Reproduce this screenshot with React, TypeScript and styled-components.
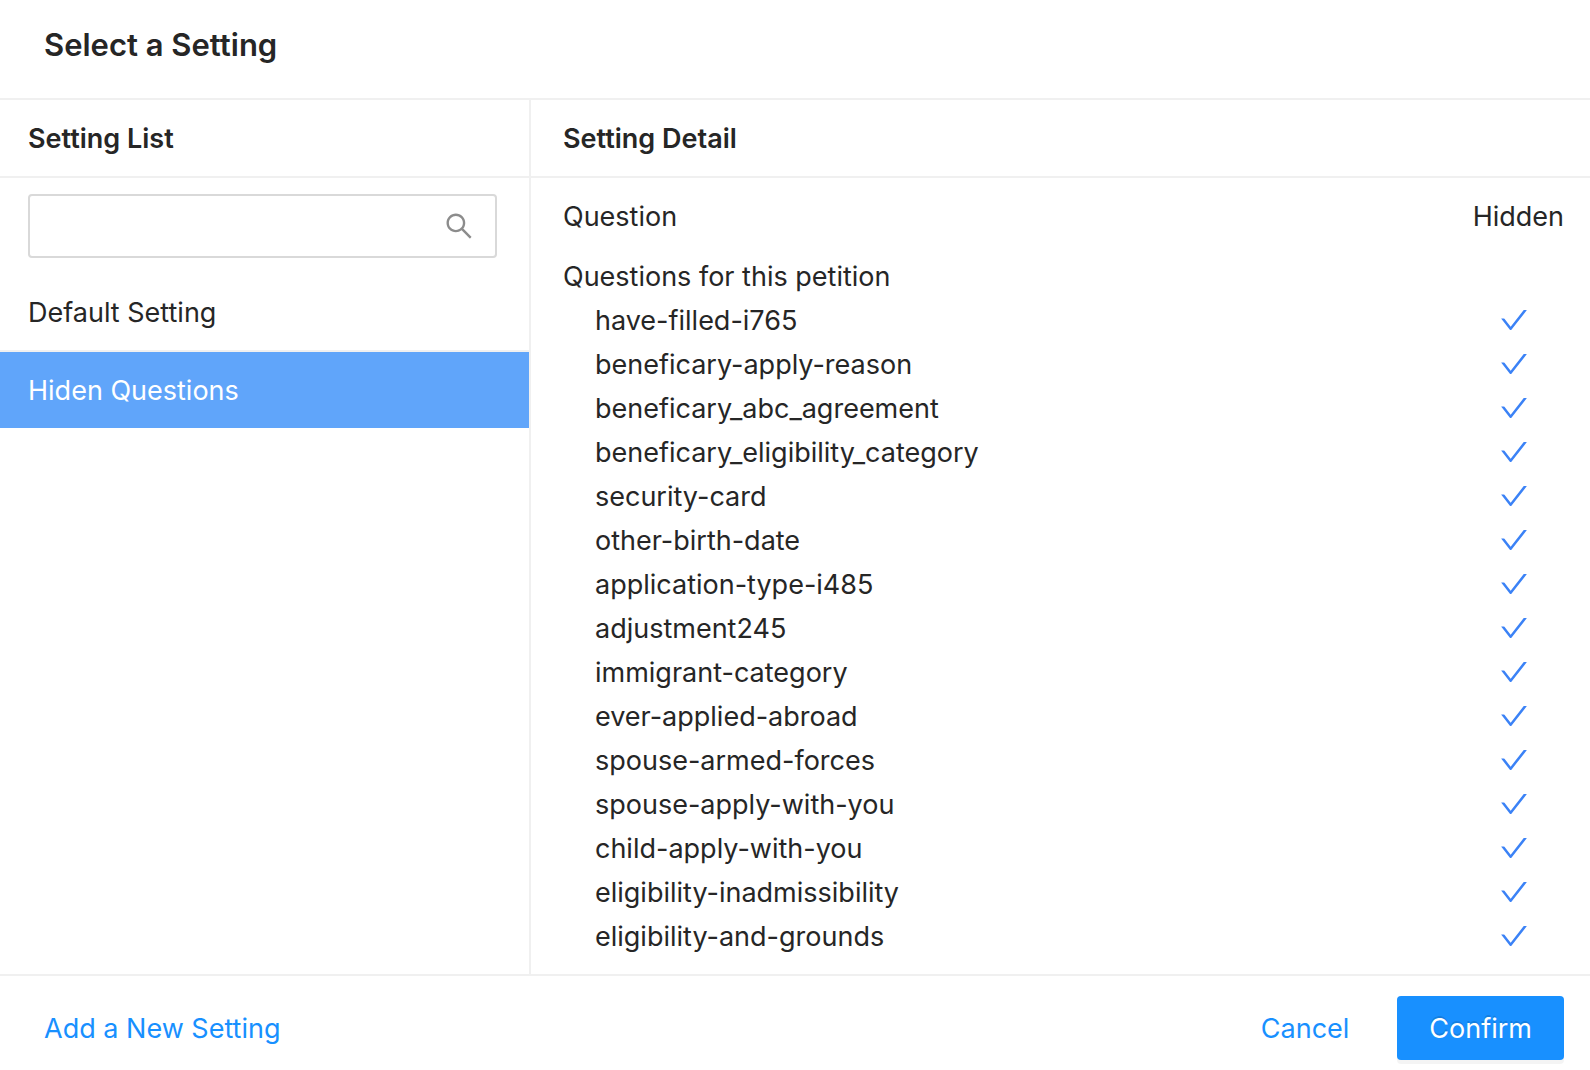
import React, { useState } from "react";
import styled, { createGlobalStyle } from "styled-components";

const GlobalStyle = createGlobalStyle`
  *, *::before, *::after { box-sizing: border-box; }
  body {
    margin: 0;
    background: #fff;
    color: #262626;
    font-family: Inter, "Liberation Sans", sans-serif;
    font-size: 27px;
    line-height: 42px;
  }
  button, input { font: inherit; }
`;

const Dialog = styled.div`
  display: flex;
  flex-direction: column;
  min-height: 100vh;
`;

const DialogHeader = styled.header`
  padding: 24px 44px 32px;
  border-bottom: 2px solid #f0f0f0;
`;

const DialogTitle = styled.h1`
  margin: 0;
  font-size: 31px;
  font-weight: 600;
`;

const Columns = styled.main`
  flex: 1;
  display: grid;
  grid-template-columns: calc(100% / 3 + 1px) 1fr;
`;

const ListPane = styled.section`
  border-right: 2px solid #f0f0f0;
`;

const DetailPane = styled.section`
  min-width: 0;
`;

const PaneTitle = styled.h2<{ $inset: number }>`
  margin: 0;
  padding: 18px ${(p) => p.$inset}px 16px;
  border-bottom: 2px solid #f0f0f0;
  font-size: 27px;
  font-weight: 600;
`;

const SearchBox = styled.form`
  display: flex;
  align-items: center;
  height: 64px;
  margin: 16px 32px 16px 28px;
  padding: 0 22px;
  border: 2px solid #d9d9d9;
  border-radius: 4px;
`;

const SearchInput = styled.input`
  flex: 1;
  min-width: 0;
  padding: 0;
  border: 0;
  outline: 0;
  background: none;
  color: inherit;
`;

const SearchButton = styled.button`
  display: flex;
  padding: 0;
  border: 0;
  background: none;
  color: #8c8c8c;
  cursor: pointer;
`;

const SettingItems = styled.ul`
  margin: 0;
  padding: 0;
  list-style: none;
`;

const SettingItem = styled.li`
  & + & { border-top: 2px solid #f0f0f0; }
`;

const SettingButton = styled.button<{ $selected: boolean }>`
  display: block;
  width: 100%;
  padding: 18px 28px 16px;
  border: 0;
  background: ${(p) => (p.$selected ? "#60a5fa" : "transparent")};
  color: ${(p) => (p.$selected ? "#fff" : "inherit")};
  text-align: left;
  cursor: pointer;
`;

const DetailBody = styled.div`
  padding: 16px 26px 16px 32px;
`;

const QuestionTable = styled.table`
  width: 100%;
  border-collapse: collapse;

  th {
    padding: 2px 0 0;
    font-weight: 400;
    text-align: left;
  }
  td { padding: 0; }
  thead th { padding-bottom: 16px; }
`;

const HiddenHeading = styled.th`
  width: 1px;
`;

const QuestionRow = styled.tr`
  th { padding-left: 32px; }
  td { padding-right: 8px; }
`;

const Icon = styled.svg`
  display: block;
  width: 28px;
  height: 28px;
  fill: currentColor;
`;

const CheckIcon = styled(Icon)`
  margin: 0 auto;
  color: #3b82f6;
`;

const DialogFooter = styled.footer`
  display: flex;
  align-items: center;
  gap: 16px;
  padding: 20px 26px 10px 44px;
  border-top: 2px solid #f0f0f0;
`;

const AddLink = styled.a`
  margin-right: auto;
  padding-top: 2px;
  color: #1890ff;
  text-decoration: none;
`;

const FooterButton = styled.button<{ $primary?: boolean }>`
  height: 64px;
  padding: 2px 32px 0;
  border: 0;
  border-radius: 4px;
  background: ${(p) => (p.$primary ? "#1890ff" : "transparent")};
  color: ${(p) => (p.$primary ? "#fff" : "#1890ff")};
  box-shadow: ${(p) => (p.$primary ? "0 4px 0 rgba(0, 0, 0, 0.045)" : "none")};
  text-shadow: ${(p) => (p.$primary ? "0 -2px 0 rgba(0, 0, 0, 0.12)" : "none")};
  cursor: pointer;
`;

const settings = ["Default Setting", "Hiden Questions"];

const questions = [
  "have-filled-i765",
  "beneficary-apply-reason",
  "beneficary_abc_agreement",
  "beneficary_eligibility_category",
  "security-card",
  "other-birth-date",
  "application-type-i485",
  "adjustment245",
  "immigrant-category",
  "ever-applied-abroad",
  "spouse-armed-forces",
  "spouse-apply-with-you",
  "child-apply-with-you",
  "eligibility-inadmissibility",
  "eligibility-and-grounds",
];

export default function App() {
  const [selected, setSelected] = useState("Hiden Questions");
  const [query, setQuery] = useState("");

  return (
    <>
      <GlobalStyle />
      <Dialog>
        <DialogHeader>
          <DialogTitle>Select a Setting</DialogTitle>
        </DialogHeader>
        <Columns>
          <ListPane>
            <PaneTitle $inset={28}>Setting List</PaneTitle>
            <SearchBox role="search" onSubmit={(e) => e.preventDefault()}>
              <SearchInput
                type="text"
                aria-label="Search settings"
                value={query}
                onChange={(e) => setQuery(e.target.value)}
              />
              <SearchButton type="submit" aria-label="Search">
                <Icon viewBox="64 64 896 896" aria-hidden="true">
                  <path d="M909.6 854.5L649.9 594.8C690.2 542.7 712 479 712 412c0-80.2-31.3-155.4-87.9-212.1-56.6-56.7-132-87.9-212.1-87.9s-155.5 31.3-212.1 87.9C143.2 256.5 112 331.8 112 412c0 80.1 31.3 155.5 87.9 212.1C256.5 680.8 331.8 712 412 712c67 0 130.6-21.8 182.7-62l259.7 259.6a8.2 8.2 0 0011.6 0l43.6-43.5a8.2 8.2 0 000-11.6zM570.4 570.4C528 612.7 471.8 636 412 636s-116-23.3-158.4-65.6C211.3 528 188 471.8 188 412s23.3-116.1 65.6-158.4C296 211.3 352.2 188 412 188s116.1 23.2 158.4 65.6S636 352.2 636 412s-23.3 116.1-65.6 158.4z" />
                </Icon>
              </SearchButton>
            </SearchBox>
            <SettingItems>
              {settings
                .filter((name) => name.toLowerCase().includes(query.toLowerCase()))
                .map((name) => (
                  <SettingItem key={name}>
                    <SettingButton
                      type="button"
                      $selected={name === selected}
                      aria-pressed={name === selected}
                      onClick={() => setSelected(name)}
                    >
                      {name}
                    </SettingButton>
                  </SettingItem>
                ))}
            </SettingItems>
          </ListPane>
          <DetailPane>
            <PaneTitle $inset={32}>Setting Detail</PaneTitle>
            <DetailBody>
              <QuestionTable>
                <thead>
                  <tr>
                    <th scope="col">Question</th>
                    <HiddenHeading scope="col">Hidden</HiddenHeading>
                  </tr>
                </thead>
                <tbody>
                  <tr>
                    <th scope="rowgroup" colSpan={2}>Questions for this petition</th>
                  </tr>
                  {questions.map((question) => (
                    <QuestionRow key={question}>
                      <th scope="row">{question}</th>
                      <td>
                        <CheckIcon viewBox="64 64 896 896" role="img" aria-label="Hidden">
                          <path d="M912 190h-69.9c-9.8 0-19.1 4.5-25.1 12.2L404.7 724.5 207 474a32 32 0 00-25.1-12.2H112c-6.7 0-10.4 7.7-6.3 12.9l273.9 347c12.8 16.2 37.4 16.2 50.3 0l488.4-618.9c4.1-5.1.4-12.8-6.3-12.8z" />
                        </CheckIcon>
                      </td>
                    </QuestionRow>
                  ))}
                </tbody>
              </QuestionTable>
            </DetailBody>
          </DetailPane>
        </Columns>
        <DialogFooter>
          <AddLink href="#new-setting">Add a New Setting</AddLink>
          <FooterButton type="button">Cancel</FooterButton>
          <FooterButton type="button" $primary>Confirm</FooterButton>
        </DialogFooter>
      </Dialog>
    </>
  );
}
